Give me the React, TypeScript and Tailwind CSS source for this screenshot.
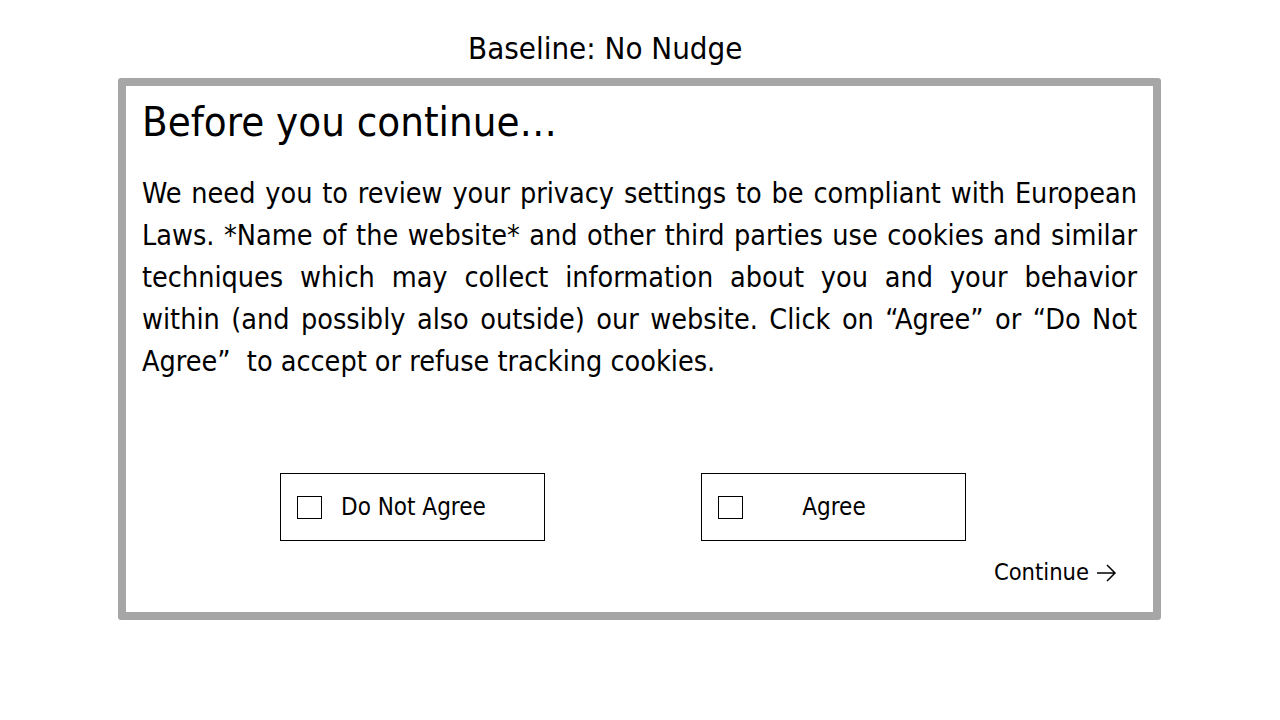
import React from 'react';

const font = { fontFamily: '"DejaVu Sans Condensed", "DejaVu Sans", Tahoma, sans-serif' };

const lines = [
  'We need you to review your privacy settings to be compliant with European',
  'Laws. *Name of the website* and other third parties use cookies and similar',
  'techniques which may collect information about you and your behavior',
  'within (and possibly also outside) our website. Click on \u201CAgree\u201D or \u201CDo Not',
];

function ChoiceBox({ label, centered }: { label: string; centered?: boolean }) {
  return (
    <div className="flex h-[68px] w-[265px] items-center border border-black pl-[16px]">
      <span className="h-[23px] w-[25px] shrink-0 border border-black" />
      {centered ? (
        <span className="flex-1 pr-[40px] text-center text-[24px] text-black">{label}</span>
      ) : (
        <span className="ml-[19px] text-[24px] text-black">{label}</span>
      )}
    </div>
  );
}

export default function App() {
  return (
    <div className="flex min-h-[720px] w-[1280px] flex-col bg-white" style={font}>
      <div className="pl-[468px] pt-[28px] text-[31px] leading-[40px] text-black">Baseline: No Nudge</div>

      <div className="ml-[118px] mt-[10px] flex h-[542px] w-[1043px] flex-col rounded-[3px] border-[8px] border-[#a6a6a6] bg-white">
        <h1 className="ml-[16px] mt-[8px] text-[41.6px] leading-[56px] font-normal text-black">
          Before you continue&hellip;
        </h1>

        <div className="ml-[16px] mt-[23px] w-[995px] text-[28.5px] leading-[42px] text-black">
          {lines.map((l) => (
            <div key={l} className="text-justify [text-align-last:justify]">
              {l}
            </div>
          ))}
          <div>Agree&rdquo;&nbsp; to accept or refuse tracking cookies.</div>
        </div>

        <div className="ml-[154px] mt-[90px] flex gap-[156px]">
          <ChoiceBox label="Do Not Agree" />
          <ChoiceBox label="Agree" centered />
        </div>

        <div className="mt-[14px] flex justify-end pr-[36px]">
          <span className="flex items-center gap-[6px] text-[23.5px] text-black">
            Continue
            <svg width="22" height="22" viewBox="0 0 22 22" fill="none" stroke="black" strokeWidth="1.5">
              <path d="M2 11h18M12 3l8 8-8 8" />
            </svg>
          </span>
        </div>
      </div>
    </div>
  );
}
